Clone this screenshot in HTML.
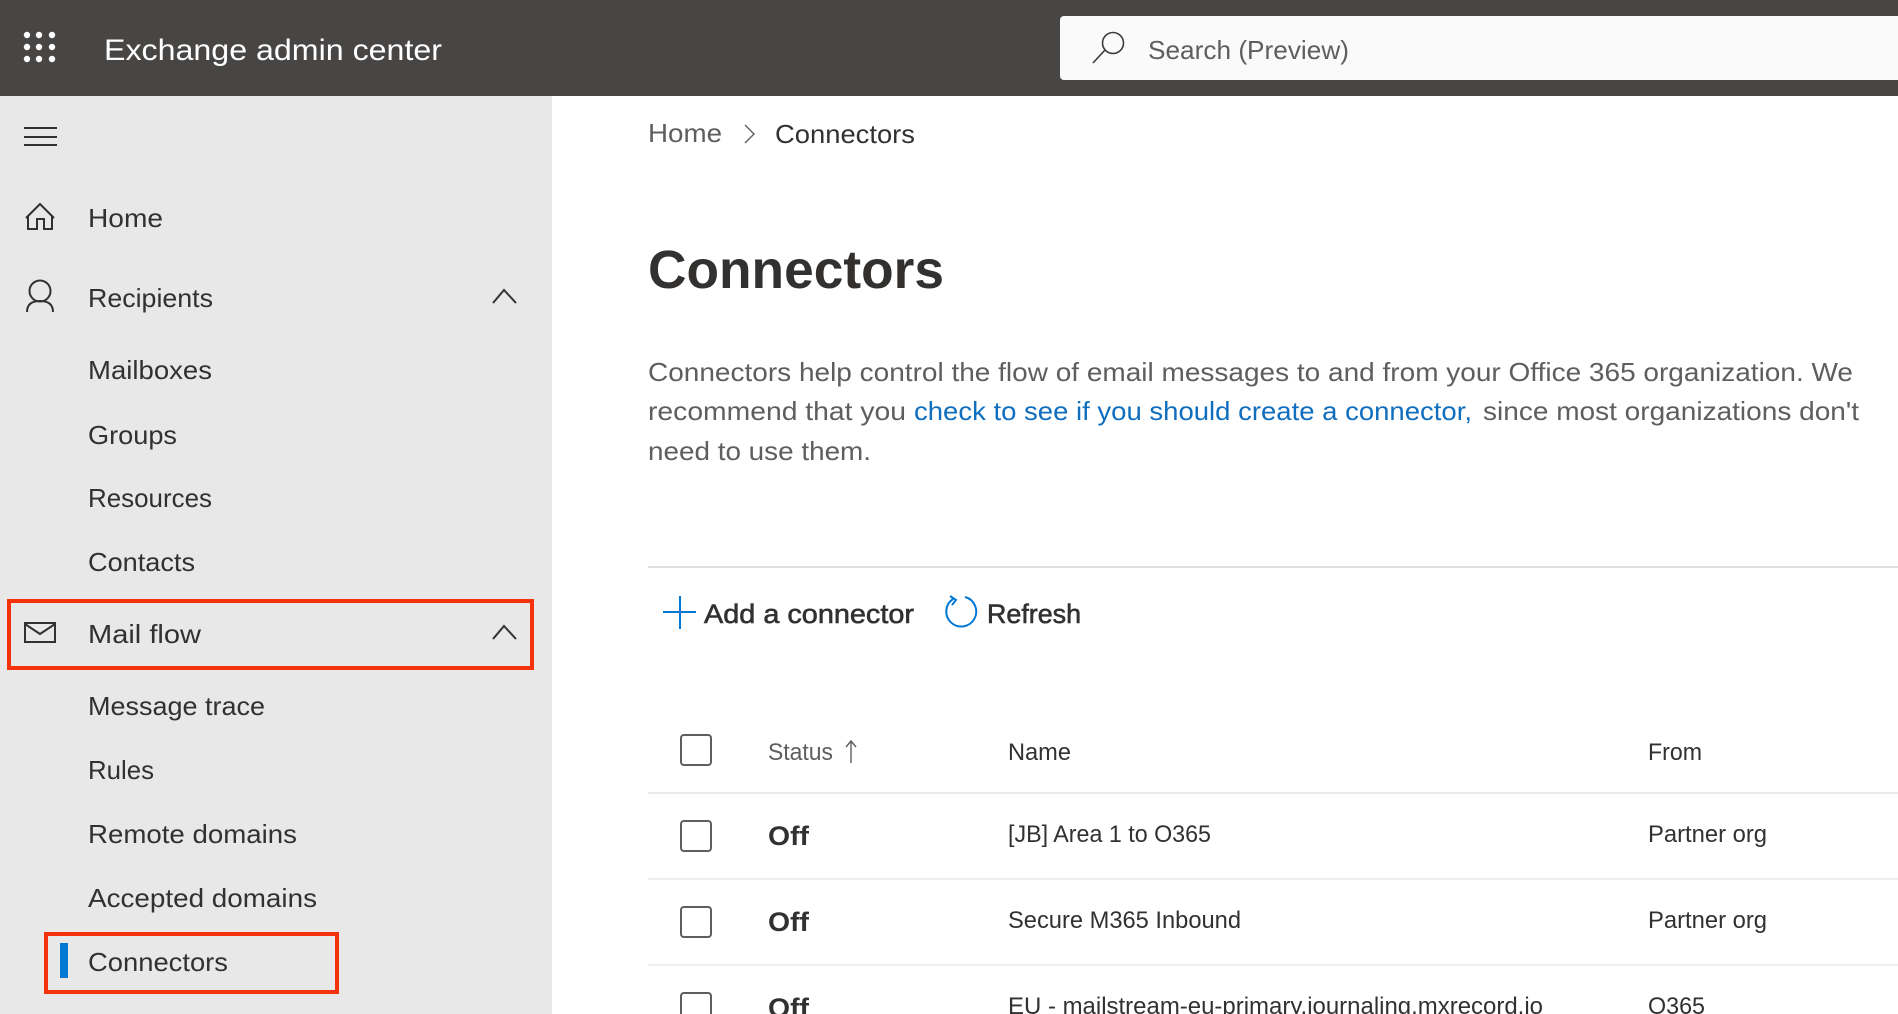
<!DOCTYPE html>
<html><head><meta charset="utf-8"><title>Exchange admin center</title>
<style>
html,body{margin:0;padding:0;width:1898px;height:1014px;overflow:hidden;background:#fff}
svg{display:block;font-family:"Liberation Sans",sans-serif}
.n{font-size:26px;fill:#323130}
.t{font-size:24px;fill:#323130}
.p{font-size:26px;fill:#605e5c}
.s{font-size:27px;fill:#323130;stroke:#323130;stroke-width:.6}
.o{font-size:27px;fill:#323130;font-weight:bold}
.ic{fill:none;stroke:#323130;stroke-width:2}
.cb{fill:#fff;stroke:#605e5c;stroke-width:2}
</style></head><body>
<svg width="1898" height="1014" viewBox="0 0 1898 1014" xmlns="http://www.w3.org/2000/svg">
<rect width="1898" height="1014" fill="#fff"/>
<rect y="96" width="552" height="918" fill="#e8e8e8"/>
<rect width="1898" height="96" fill="#484644"/>
<g fill="#fff">
<circle cx="27" cy="35" r="3.2"/><circle cx="39" cy="35" r="3.2"/><circle cx="52" cy="35" r="3.2"/>
<circle cx="27" cy="47" r="3.2"/><circle cx="39" cy="47" r="3.2"/><circle cx="52" cy="47" r="3.2"/>
<circle cx="27" cy="59" r="3.2"/><circle cx="39" cy="59" r="3.2"/><circle cx="52" cy="59" r="3.2"/>
</g>
<text x="104" y="60" font-size="30" fill="#fff" textLength="338" lengthAdjust="spacingAndGlyphs">Exchange admin center</text>
<path d="M1064 16H1898V80H1064a4 4 0 0 1-4-4V20a4 4 0 0 1 4-4z" fill="#fafafa"/>
<circle cx="1113" cy="43" r="10.5" fill="none" stroke="#3b3a39" stroke-width="1.6"/>
<path d="M1105 50L1093 63" fill="none" stroke="#3b3a39" stroke-width="1.6"/>
<text x="1148" y="59" font-size="26" fill="#605e5c" textLength="201" lengthAdjust="spacingAndGlyphs">Search (Preview)</text>

<path d="M24 128H57M24 137H57M24 145H57" class="ic"/>
<path d="M26 218L40 204L54 218M28 216V229H37V219H44V229H52V216" class="ic"/>
<circle cx="40" cy="291" r="10.5" class="ic"/>
<path d="M27 312c0-8 5-11 13-11s13 3 13 11" class="ic"/>
<path d="M493 303L504 290L516 303" class="ic"/>
<rect x="25" y="623" width="30" height="19" class="ic"/>
<path d="M25 624L40 634L55 624" class="ic"/>
<path d="M493 639L504 626L516 639" class="ic"/>

<text class="n" x="88" y="227" textLength="75" lengthAdjust="spacingAndGlyphs">Home</text>
<text class="n" x="88" y="307" textLength="125" lengthAdjust="spacingAndGlyphs">Recipients</text>
<text class="n" x="88" y="379" textLength="124" lengthAdjust="spacingAndGlyphs">Mailboxes</text>
<text class="n" x="88" y="444" textLength="89" lengthAdjust="spacingAndGlyphs">Groups</text>
<text class="n" x="88" y="507" textLength="124" lengthAdjust="spacingAndGlyphs">Resources</text>
<text class="n" x="88" y="571" textLength="107" lengthAdjust="spacingAndGlyphs">Contacts</text>
<text class="n" x="88" y="643" textLength="113" lengthAdjust="spacingAndGlyphs">Mail flow</text>
<text class="n" x="88" y="715" textLength="177" lengthAdjust="spacingAndGlyphs">Message trace</text>
<text class="n" x="88" y="779" textLength="66" lengthAdjust="spacingAndGlyphs">Rules</text>
<text class="n" x="88" y="843" textLength="209" lengthAdjust="spacingAndGlyphs">Remote domains</text>
<text class="n" x="88" y="907" textLength="229" lengthAdjust="spacingAndGlyphs">Accepted domains</text>
<text class="n" x="88" y="971" textLength="140" lengthAdjust="spacingAndGlyphs">Connectors</text>
<rect x="60" y="943" width="8" height="35" fill="#0078d4"/>
<rect x="9" y="601" width="523" height="67" fill="none" stroke="#f4330d" stroke-width="4"/>
<rect x="46" y="934" width="291" height="58" fill="none" stroke="#f4330d" stroke-width="4"/>

<text class="p" x="648" y="142" textLength="74" lengthAdjust="spacingAndGlyphs">Home</text>
<path d="M745 125L754 134L745 143" fill="none" stroke="#605e5c" stroke-width="1.4"/>
<text class="n" x="775" y="143" textLength="140" lengthAdjust="spacingAndGlyphs">Connectors</text>
<text x="648" y="288" font-size="54" font-weight="bold" fill="#323130" textLength="296" lengthAdjust="spacingAndGlyphs">Connectors</text>

<text class="p" x="648" y="381" textLength="1205" lengthAdjust="spacingAndGlyphs">Connectors help control the flow of email messages to and from your Office 365 organization. We</text>
<text class="p" x="648" y="420" textLength="258" lengthAdjust="spacingAndGlyphs">recommend that you</text>
<text x="914" y="420" font-size="26" fill="#106ebe" textLength="558" lengthAdjust="spacingAndGlyphs">check to see if you should create a connector,</text>
<text class="p" x="1483" y="420" textLength="376" lengthAdjust="spacingAndGlyphs">since most organizations don't</text>
<text class="p" x="648" y="460" textLength="223" lengthAdjust="spacingAndGlyphs">need to use them.</text>

<rect x="648" y="566" width="1250" height="2" fill="#e1dfdd"/>
<path d="M663 612H696M680 596V629" fill="none" stroke="#0078d4" stroke-width="2"/>
<text class="s" x="704" y="623" textLength="210" lengthAdjust="spacingAndGlyphs">Add a connector</text>
<path d="M965 597A15 15 0 1 1 953 599" fill="none" stroke="#0078d4" stroke-width="2"/>
<path d="M950 596L956 600L952 605" fill="none" stroke="#0078d4" stroke-width="2"/>
<text class="s" x="987" y="623" textLength="94" lengthAdjust="spacingAndGlyphs">Refresh</text>

<rect x="681" y="735" width="30" height="30" rx="3" class="cb"/>
<text class="t" x="768" y="760" style="fill:#605e5c" textLength="65" lengthAdjust="spacingAndGlyphs">Status</text>
<path d="M851 763V741M846 747L851 741L856 747" fill="none" stroke="#605e5c" stroke-width="1.4"/>
<text class="t" x="1008" y="760" textLength="63" lengthAdjust="spacingAndGlyphs">Name</text>
<text class="t" x="1648" y="760" textLength="54" lengthAdjust="spacingAndGlyphs">From</text>
<rect x="648" y="792" width="1250" height="2" fill="#edebe9"/>

<rect x="681" y="821" width="30" height="30" rx="3" class="cb"/>
<text class="o" x="768" y="845" textLength="41" lengthAdjust="spacingAndGlyphs">Off</text>
<text class="t" x="1008" y="842" textLength="203" lengthAdjust="spacingAndGlyphs">[JB] Area 1 to O365</text>
<text class="t" x="1648" y="842" textLength="119" lengthAdjust="spacingAndGlyphs">Partner org</text>
<rect x="648" y="878" width="1250" height="2" fill="#f0efee"/>

<rect x="681" y="907" width="30" height="30" rx="3" class="cb"/>
<text class="o" x="768" y="931" textLength="41" lengthAdjust="spacingAndGlyphs">Off</text>
<text class="t" x="1008" y="928" textLength="233" lengthAdjust="spacingAndGlyphs">Secure M365 Inbound</text>
<text class="t" x="1648" y="928" textLength="119" lengthAdjust="spacingAndGlyphs">Partner org</text>
<rect x="648" y="964" width="1250" height="2" fill="#f0efee"/>

<rect x="681" y="993" width="30" height="30" rx="3" class="cb"/>
<text class="o" x="768" y="1017" textLength="41" lengthAdjust="spacingAndGlyphs">Off</text>
<text class="t" x="1008" y="1014" textLength="535" lengthAdjust="spacingAndGlyphs">EU - mailstream-eu-primary.journaling.mxrecord.io</text>
<text class="t" x="1648" y="1014" textLength="57" lengthAdjust="spacingAndGlyphs">O365</text>
</svg>
</body></html>
